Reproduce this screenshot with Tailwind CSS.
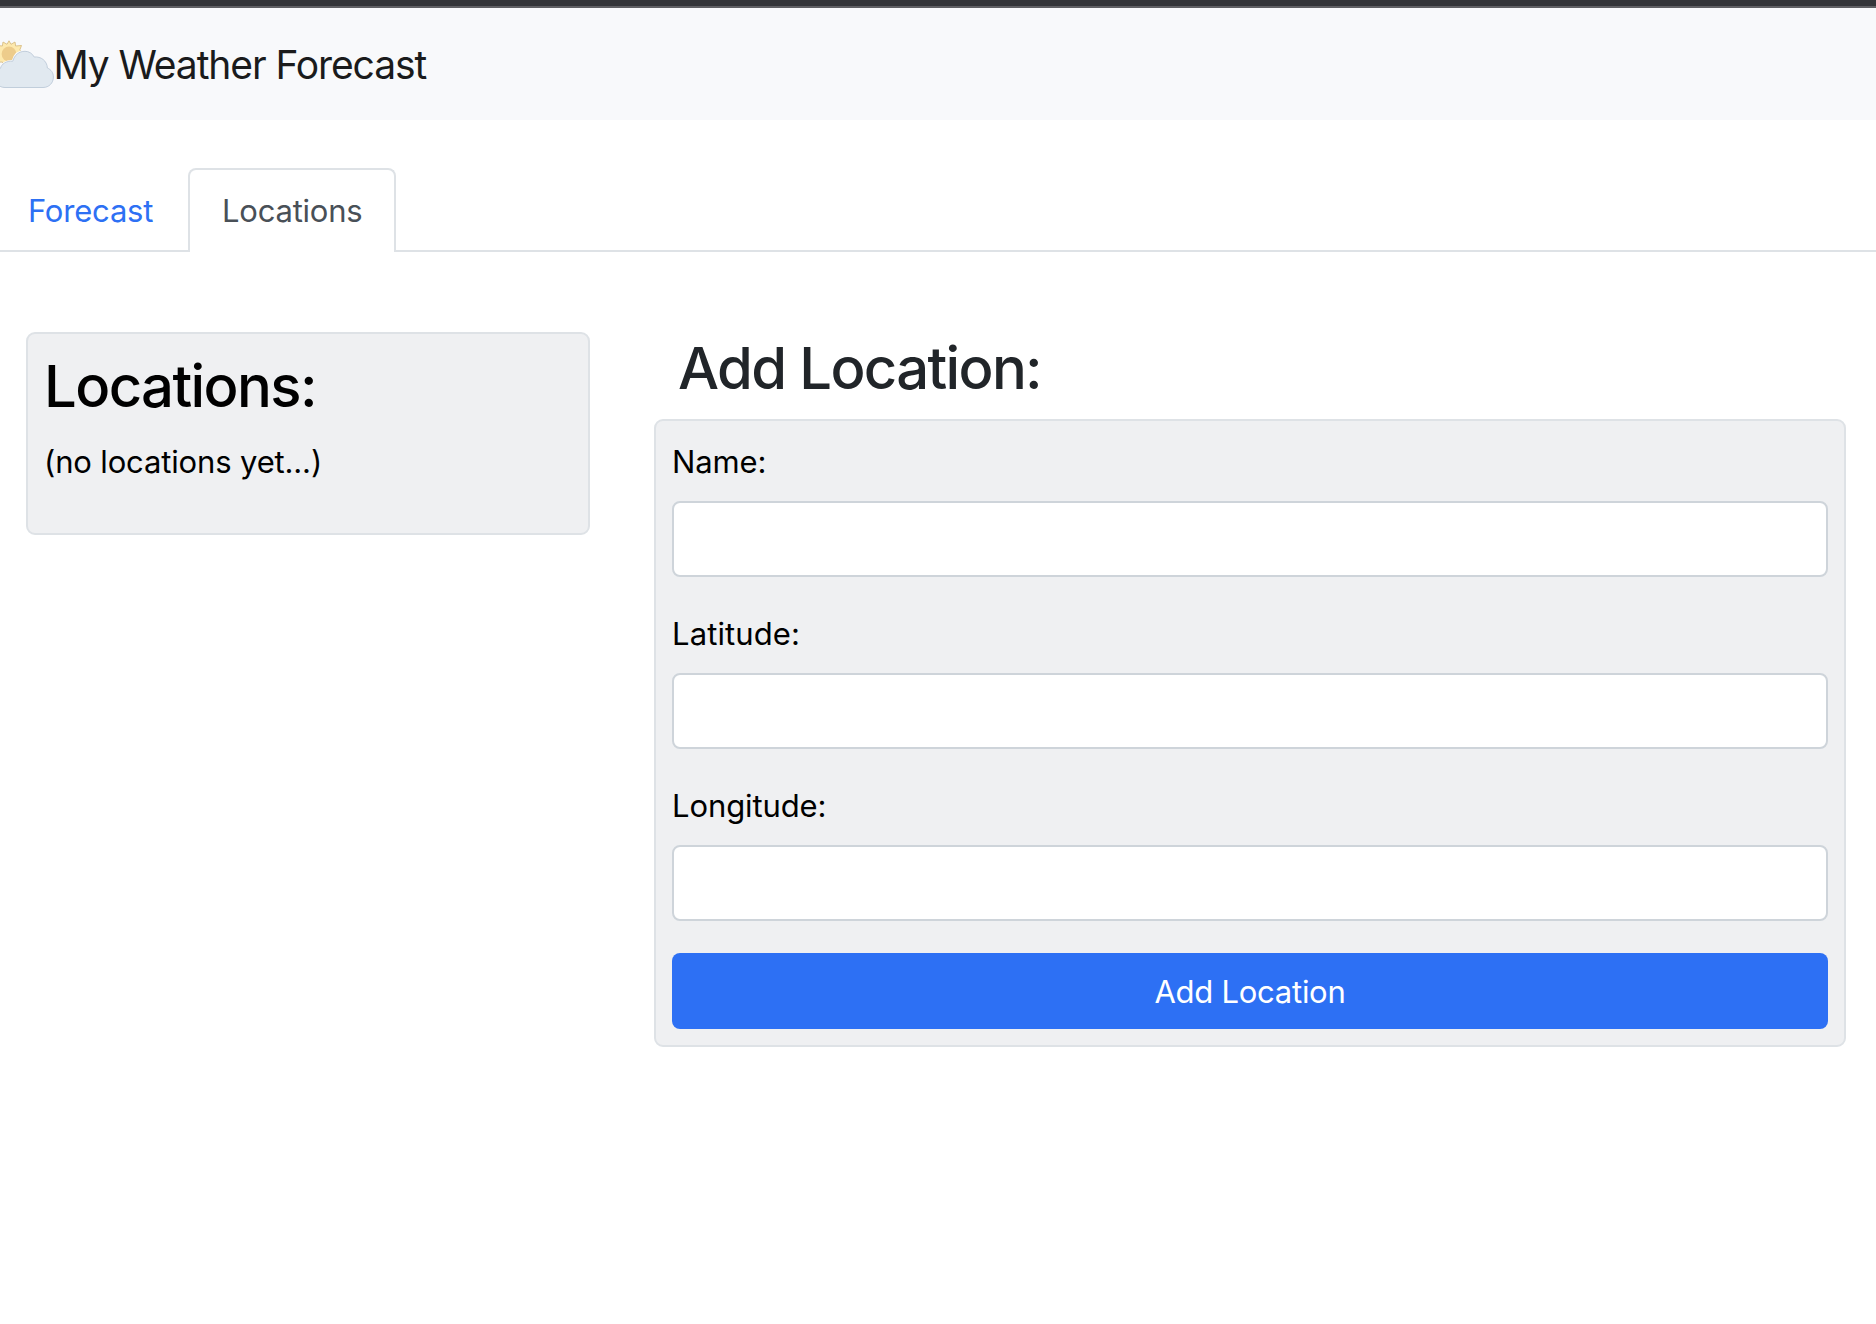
<!DOCTYPE html>
<html lang="en">
<head>
<meta charset="utf-8">
<title>My Weather Forecast</title>
<script src="https://cdn.jsdelivr.net/npm/@tailwindcss/browser@4"></script>
</head>
<body class="min-h-screen overflow-hidden bg-white font-[Inter,sans-serif] text-[31px] leading-[48px] text-black">
  <div class="h-2 border-b-2 border-[#606064] bg-[#343539]"></div>

  <header class="flex h-28 items-center bg-[#f8f9fb]">
    <svg class="h-14 w-[53.5px] shrink-0" viewBox="0 36 53.5 56" fill="none">
      <path d="M9 40.8l2 3.5 4-2.3.6 4 5.9-.5-1.6 4.2 2.4 4.3-2.4 4.3 1.6 4-5.9-.3-.6 4-4-2.3-2 3.5-2-3.5-4 2.3-.6-4-5.900.3 1.600-4-2.400-4.300 2.400-4.300-1.600-4.200 5.900.5.6-4 4 2.300z" fill="#fde9ae" stroke="#d8bd84" stroke-width=".9"/>
      <circle cx="9" cy="54" r="7.4" fill="#edcc8b"/>
      <path d="M5 87.5C-1 87.5-5 83-5 77c0-4 2-7 5.500-8.700C1.500 64 6 60.800 12.800 61.200 14.500 55 19 51.300 25 51.300c3.800 0 7.200 2 9.200 5.700 6.800-.7 12.800 3.800 13.200 11 3.800 1.700 6 4.800 6 9 0 6-4.400 10.500-10.400 10.500z" fill="#e1e9f0" stroke="#f8f9fb" stroke-width="2.400"/>
      <path d="M5 87.500C-1 87.500-5 83-5 77c0-4 2-7 5.500-8.700C1.500 64 6 60.800 12.800 61.200 14.500 55 19 51.300 25 51.300c3.800 0 7.200 2 9.200 5.700 6.800-.7 12.800 3.800 13.200 11 3.800 1.700 6 4.800 6 9 0 6-4.400 10.500-10.400 10.500z" fill="#e1e9f0" stroke="#bccad8" stroke-width=".9"/>
    </svg>
    <span class="pt-0.5 text-[39px] leading-[60px] tracking-[-1.1px] whitespace-nowrap text-[#1a1b1c]">My Weather Forecast</span>
  </header>

  <nav class="mt-12 flex h-21 border-b-2 border-[#dee2e6]">
    <a class="w-[188px] pt-[19px] pl-7 tracking-[-0.2px] text-[#2d70f4]">Forecast</a>
    <a class="-mb-0.5 w-52 rounded-t-lg border-2 border-b-0 border-[#dee2e6] bg-white pt-[17px] pl-8 tracking-[-0.22px] text-[#495057]">Locations</a>
  </nav>

  <main class="flex items-start gap-16 pt-20 pr-[30px] pl-[26px]">
    <section class="w-[564px] rounded-[9px] border-2 border-[#dee2e6] bg-[#eff0f2] p-4 pb-12">
      <h2 class="mb-4 pt-px text-[58px] leading-[70px] font-medium tracking-[-1.6px]">Locations:</h2>
      <p class="pt-px leading-[47px] tracking-[-0.15px]">(no locations yet...)</p>
    </section>

    <section class="flex-1">
      <h2 class="mb-4 pt-px pl-6 text-[58px] leading-[70px] font-medium tracking-[-1.65px] text-[#212529]">Add Location:</h2>
      <form class="flex flex-col rounded-[9px] border-2 border-[#dee2e6] bg-[#eff0f2] p-4">
        <label class="mb-4 pt-px leading-[47px] tracking-[-0.1px]" for="name">Name:</label>
        <input id="name" class="mb-8 h-19 rounded-lg border-2 border-[#ced4da] bg-white px-6">
        <label class="mb-4 pt-px leading-[47px] tracking-[0.11px]" for="latitude">Latitude:</label>
        <input id="latitude" class="mb-8 h-19 rounded-lg border-2 border-[#ced4da] bg-white px-6">
        <label class="mb-4 pt-px leading-[47px] tracking-[-0.1px]" for="longitude">Longitude:</label>
        <input id="longitude" class="mb-8 h-19 rounded-lg border-2 border-[#ced4da] bg-white px-6">
        <button type="button" class="h-19 rounded-lg bg-[#2d70f4] pt-px tracking-[-0.26px] text-white">Add Location</button>
      </form>
    </section>
  </main>
</body>
</html>
